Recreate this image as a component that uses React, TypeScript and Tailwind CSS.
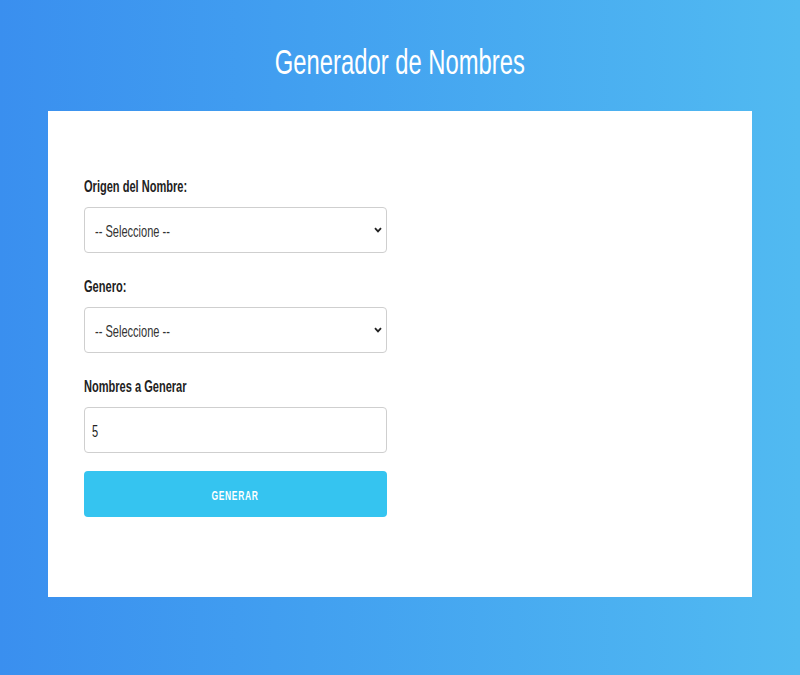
const font = { fontFamily: '"Liberation Sans", Arial, sans-serif' };

// the reference uses a condensed face; squeeze Liberation Sans to match
function Narrow({ children, center, wide }: { children: React.ReactNode; center?: boolean; wide?: boolean }) {
  return (
    <span
      className={`inline-block whitespace-nowrap ${wide ? "scale-x-[0.68]" : "scale-x-[0.65]"} ${center ? "origin-center" : "origin-left"}`}
    >
      {children}
    </span>
  );
}

const Chevron = () => (
  <svg className="pointer-events-none absolute right-[5px] top-1/2 -translate-y-1/2" width="8" height="6" viewBox="0 0 8 6">
    <path d="M1 1.2 L4 4.4 L7 1.2" fill="none" stroke="#222" strokeWidth="1.8" />
  </svg>
);

function Label({ text }: { text: string }) {
  return (
    <label className="mb-[10px] block text-[17px] font-bold leading-[20px] text-[#222]">
      <Narrow>{text}</Narrow>
    </label>
  );
}

function SelectField({ label }: { label: string }) {
  return (
    <div className="mb-[24px]">
      <Label text={label} />
      <div className="relative">
        <select
          className="h-[46px] w-full appearance-none rounded-[4px] border border-[#cfcfcf] bg-white px-[10px] text-[17px] text-transparent outline-none"
          defaultValue=""
        >
          <option value="">-- Seleccione --</option>
        </select>
        <span className="pointer-events-none absolute left-[11px] top-[15px] text-[17px] leading-[20px] text-[#333]">
          <Narrow>-- Seleccione --</Narrow>
        </span>
        <Chevron />
      </div>
    </div>
  );
}

export default function App() {
  return (
    <div
      className="flex min-h-[675px] w-full flex-col items-center bg-gradient-to-r from-[#3a8fef] to-[#51baf1] px-[48px] pt-[40px]"
      style={font}
    >
      <h1 className="mb-[27px] text-[35px] leading-[44px] text-white">
        <Narrow center wide>
          Generador de Nombres
        </Narrow>
      </h1>
      <div className="h-[486px] w-full bg-white px-[36px] pt-[66px]">
        <form className="w-[303px]" onSubmit={(e) => e.preventDefault()}>
          <SelectField label="Origen del Nombre:" />
          <SelectField label="Genero:" />
          <div className="mb-[18px]">
            <Label text="Nombres a Generar" />
            <div className="relative">
              <input
                type="number"
                defaultValue={5}
                className="h-[46px] w-full rounded-[4px] border border-[#cfcfcf] bg-white px-[7px] text-[17px] text-transparent caret-[#222] outline-none [appearance:textfield]"
              />
              <span className="pointer-events-none absolute left-[8px] top-[15px] text-[17px] leading-[20px] text-[#222]">
                <Narrow>5</Narrow>
              </span>
            </div>
          </div>
          <button type="submit" className="h-[46px] w-full rounded-[4px] bg-[#35c4f0] pt-[3px] text-[13px] font-bold tracking-[1px] text-white">
            <Narrow center>GENERAR</Narrow>
          </button>
        </form>
      </div>
    </div>
  );
}
